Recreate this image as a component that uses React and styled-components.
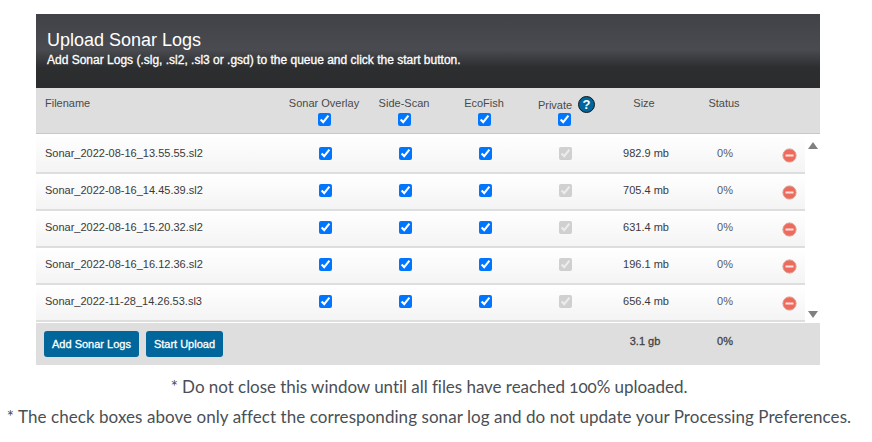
import React from 'react';
import styled, { createGlobalStyle } from 'styled-components';

const GlobalStyle = createGlobalStyle`
  html, body { margin: 0; padding: 0; background: #fff; }
  body { font-family: "Liberation Sans", Arial, sans-serif; }
`;

const Page = styled.div`
  width: 872px;
  height: 442px;
  padding-top: 14px;
  box-sizing: border-box;
  overflow: hidden;
`;

const Panel = styled.div`
  width: 784px;
  margin-left: 36px;
`;

const Header = styled.div`
  height: 74px;
  box-sizing: border-box;
  padding: 16px 11px 0;
  color: #fff;
  background: linear-gradient(to bottom, #404247 0%, #494b50 48%, #2d2e30 72%, #2b2c2e 100%);
`;

const Title = styled.h1`
  margin: 0;
  font-size: 18px;
  line-height: 21px;
  font-weight: 400;
`;

const Subtitle = styled.p`
  margin: 1px 0 0;
  font-size: 12px;
  line-height: 16px;
  font-weight: 400;
  -webkit-text-stroke: 0.3px #fff;
`;

const HeadRow = styled.div`
  display: grid;
  grid-template-columns: 248px repeat(6, 80px) 56px;
  height: 46px;
  box-sizing: border-box;
  background: #dedede;
  border-bottom: 1px solid #c8c8c8;
  color: #4a4a4a;
  font-size: 11px;
`;

const HeadCell = styled.div`
  display: flex;
  flex-direction: column;
  align-items: center;
  padding-top: 9px;
  line-height: 13px;
`;

const FileHead = styled(HeadCell)`
  align-items: flex-start;
  padding-left: 9px;
`;

const PrivateLabel = styled.div`
  position: relative;
  margin: 2px 18px 0 0;
`;

const Help = styled.span`
  position: absolute;
  left: 40px;
  top: -3px;
  width: 17px;
  height: 17px;
  box-sizing: border-box;
  border-radius: 50%;
  background: #00669b;
  border: 1px solid #10151a;
  color: #fff;
  font-size: 13px;
  font-weight: 700;
  line-height: 15px;
  text-align: center;
`;

const Box = styled.input.attrs({ type: 'checkbox' })`
  width: 13px;
  height: 13px;
  margin: 3px 0 0;
  accent-color: #0075ff;
`;

const PrivateBox = styled(Box)`
  margin-top: 1px;
`;

const RowBox = styled(Box)`
  margin: 0;
`;

const Body = styled.div`
  display: flex;
  height: 189px;
`;

const Rows = styled.div`
  width: 769px;
`;

const Row = styled.div`
  display: grid;
  grid-template-columns: 249px repeat(6, 80px) 40px;
  align-items: center;
  height: ${p => (p.$first ? 40 : 37)}px;
  box-sizing: border-box;
  padding-bottom: ${p => (p.$first ? 0 : 3)}px;
  border-bottom: 2px solid #dedede;
  background: linear-gradient(to bottom, #fff, #f4f4f4);
  color: #3a3a3a;
  font-size: 11px;
`;

const FileName = styled.div`
  padding-left: 9px;
`;

const Cell = styled.div`
  display: flex;
  justify-content: center;
  align-items: center;
`;

const SizeCell = styled(Cell)`
  padding-left: 2px;
`;

const Status = styled(Cell)`
  color: #5a5a5a;
`;

const RemoveCell = styled(Cell)`
  padding: 4px 0 0 8px;
`;

const Remove = styled.svg`
  width: 15px;
  height: 15px;
`;

const Track = styled.div`
  width: 15px;
  display: flex;
  flex-direction: column;
  justify-content: space-between;
  align-items: center;
  padding: 8px 0 5px;
  box-sizing: border-box;
`;

const ArrowUp = styled.div`
  width: 0;
  height: 0;
  border-left: 5px solid transparent;
  border-right: 5px solid transparent;
  border-bottom: 7px solid #808080;
`;

const ArrowDown = styled(ArrowUp)`
  border-bottom: 0;
  border-top: 7px solid #808080;
`;

const Footer = styled.div`
  display: grid;
  grid-template-columns: 569px 80px 80px;
  height: 42px;
  background: #dedede;
  color: #444;
  font-size: 11px;
`;

const Buttons = styled.div`
  display: flex;
  gap: 7px;
  padding: 8px 0 0 8px;
`;

const Button = styled.button`
  height: 26px;
  padding: 0 8px;
  border: 0;
  border-radius: 3px;
  background: #00669b;
  color: #fff;
  font-family: inherit;
  font-size: 11px;
  font-weight: 400;
  -webkit-text-stroke: 0.3px #fff;
  white-space: nowrap;
`;

const Total = styled.div`
  text-align: center;
  padding-top: 12px;
  line-height: 13px;
  color: #444;
  -webkit-text-stroke: 0.3px #444;
`;

const Note = styled.p`
  margin: 0;
  text-align: center;
  font-family: "Lato", "Noto Sans", sans-serif;
  font-size: 17px;
  line-height: 22px;
  font-variant-numeric: oldstyle-nums;
  letter-spacing: ${p => p.$spacing};
  color: #4a4f55;
  white-space: nowrap;
`;

const Notes = styled.div`
  width: 858px;
  padding-top: 11px;
  display: flex;
  flex-direction: column;
  gap: 8px;
`;

const files = [
  { name: 'Sonar_2022-08-16_13.55.55.sl2', size: '982.9 mb' },
  { name: 'Sonar_2022-08-16_14.45.39.sl2', size: '705.4 mb' },
  { name: 'Sonar_2022-08-16_15.20.32.sl2', size: '631.4 mb' },
  { name: 'Sonar_2022-08-16_16.12.36.sl2', size: '196.1 mb' },
  { name: 'Sonar_2022-11-28_14.26.53.sl3', size: '656.4 mb' },
];

const RemoveIcon = () => (
  <Remove viewBox="0 0 15 15">
    <circle cx="7.5" cy="7.5" r="6.6" fill="#ee6a5c" stroke="#d9a090" strokeWidth="1" />
    <rect x="3.5" y="6.5" width="8" height="2" fill="#fde3df" />
  </Remove>
);

export default function App() {
  return (
    <Page>
      <GlobalStyle />
      <Panel>
        <Header>
          <Title>Upload Sonar Logs</Title>
          <Subtitle>Add Sonar Logs (.slg, .sl2, .sl3 or .gsd) to the queue and click the start button.</Subtitle>
        </Header>
        <HeadRow>
          <FileHead>Filename</FileHead>
          <HeadCell>Sonar Overlay<Box defaultChecked /></HeadCell>
          <HeadCell>Side-Scan<Box defaultChecked /></HeadCell>
          <HeadCell>EcoFish<Box defaultChecked /></HeadCell>
          <HeadCell>
            <PrivateLabel>Private<Help>?</Help></PrivateLabel>
            <PrivateBox defaultChecked />
          </HeadCell>
          <HeadCell>Size</HeadCell>
          <HeadCell>Status</HeadCell>
        </HeadRow>
        <Body>
          <Rows>
            {files.map((f, i) => (
              <Row key={f.name} $first={i === 0}>
                <FileName>{f.name}</FileName>
                <Cell><RowBox defaultChecked /></Cell>
                <Cell><RowBox defaultChecked /></Cell>
                <Cell><RowBox defaultChecked /></Cell>
                <Cell><RowBox defaultChecked disabled /></Cell>
                <SizeCell>{f.size}</SizeCell>
                <Status>0%</Status>
                <RemoveCell><RemoveIcon /></RemoveCell>
              </Row>
            ))}
          </Rows>
          <Track>
            <ArrowUp />
            <ArrowDown />
          </Track>
        </Body>
        <Footer>
          <Buttons>
            <Button>Add Sonar Logs</Button>
            <Button>Start Upload</Button>
          </Buttons>
          <Total>3.1 gb</Total>
          <Total>0%</Total>
        </Footer>
      </Panel>
      <Notes>
        <Note $spacing="-0.04px">* Do not close this window until all files have reached 100% uploaded.</Note>
        <Note $spacing="0.06px">* The check boxes above only affect the corresponding sonar log and do not update your Processing Preferences.</Note>
      </Notes>
    </Page>
  );
}
